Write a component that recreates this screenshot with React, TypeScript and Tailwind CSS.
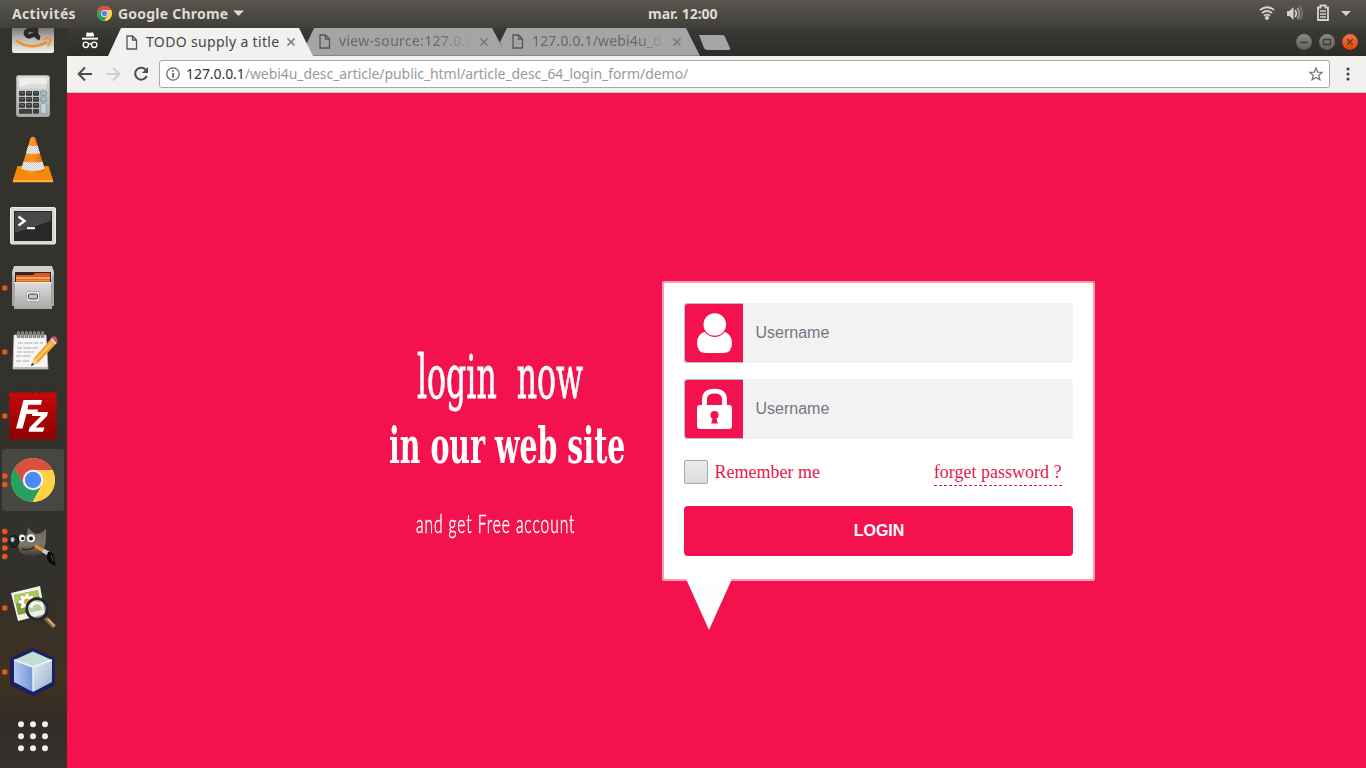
import React from "react";

function ChromeLogo({ id }: { id: string }) {
  return (
    <g>
      <defs>
        <clipPath id={id}>
          <circle r="22" />
        </clipPath>
      </defs>
      <g clipPath={`url(#${id})`}>
        <rect x="-22" y="-22" width="44" height="44" fill="#ffd24a" />
        <path d="M-22,-22 H22 V-10 H0 L-9,5 L-19,-12Z" fill="#d9503f" />
        <path d="M-18.5,-12 L-9,5 L0,10 L9,5 L-1,23 H-24 V-12Z" fill="#25a25f" />
        <path d="M0,-10 H22 V23 H-1 L9,5Z" fill="#ffd24a" />
      </g>
      <circle r="10.2" fill="#f4f4f4" />
      <circle r="8.2" fill="#4c8bf5" />
    </g>
  );
}

function Dots({ ys }: { ys: number[] }) {
  return (
    <>
      {ys.map((y) => (
        <circle key={y} cx="4.8" cy={y} r="2.8" fill="#e9541f" />
      ))}
    </>
  );
}

function Tile({ dots = [], children }: { dots?: number[]; children: React.ReactNode }) {
  return (
    <svg className="block h-16 w-[67px] shrink-0" viewBox="0 0 67 64">
      <Dots ys={dots} />
      {children}
    </svg>
  );
}

function Dock() {
  return (
    <aside className="w-[67px] shrink-0 overflow-hidden bg-[linear-gradient(180deg,#34322d_0%,#33312c_75%,#3b3023_84%,#40331f_88%,#302c27_94%,#35322d_100%)]">
      <div className="-mt-7 flex flex-col">
        <Tile>
          <defs>
            <linearGradient id="silver" x1="0" y1="0" x2="0" y2="1">
              <stop offset="0" stopColor="#dedede" />
              <stop offset="1" stopColor="#a9a9a9" />
            </linearGradient>
            <linearGradient id="shade" x1="0" y1="0" x2="0" y2="1">
              <stop offset="0" stopColor="#55534e" />
              <stop offset=".45" stopColor="#aaa9a7" />
              <stop offset="1" stopColor="#f3f3f3" />
            </linearGradient>
          </defs>
          <rect x="12" y="22" width="42" height="31" rx="2" fill="url(#shade)" />
          <path d="M36,25 V33 Q36,37 40,38 M36,30 Q25,29 26,34 Q28,39 36,33" fill="none" stroke="#292929" strokeWidth="4.5" />
          <path d="M16,40.5 Q30,51 47,42" fill="none" stroke="#ed9421" strokeWidth="2.6" />
          <path d="M43,39.5 Q51,36.5 50.5,40 Q50,44 47.5,46" fill="none" stroke="#ed9421" strokeWidth="1.8" />
        </Tile>
        <Tile>
          <rect x="16.5" y="11.5" width="33" height="41" rx="2" fill="url(#silver)" stroke="#a2a2a2" />
          <rect x="19" y="14" width="28" height="11" rx="1.5" fill="#dcdedb" stroke="#c4c4c4" strokeWidth=".6" />
          <path d="M19,23 Q33,18 47,20 V14 H19Z" fill="#eeefec" />
          {[27, 33, 39].map((y) =>
            [19, 26, 33].map((x) => (
              <g key={`${x}-${y}`}>
                <rect x={x} y={y} width="6" height="4.8" rx="1" fill="#343638" />
                <rect x={x + 1} y={y + 1} width="4" height="1.7" fill="#5c5f61" />
              </g>
            ))
          )}
          <rect x="19" y="45" width="13" height="4.8" rx="1" fill="#3d4042" />
          <rect x="33" y="45" width="6" height="4.8" rx="1" fill="#3d4042" />
          {[27, 33].map((y) => (
            <rect key={y} x="40.7" y={y} width="5.8" height="4.4" rx=".8" fill="#a8bfc9" stroke="#718893" strokeWidth=".8" />
          ))}
          <rect x="40.9" y="39.5" width="5.3" height="9.8" rx=".8" fill="#c3d5dd" stroke="#8ba0aa" strokeWidth=".8" />
        </Tile>
        <Tile>
          <defs>
            <pattern id="check" width="2" height="2" patternUnits="userSpaceOnUse">
              <rect width="2" height="2" fill="#f3f3f3" />
              <path d="M0,0H1V1H0ZM1,1H2V2H1Z" fill="#cbcbcb" />
            </pattern>
            <linearGradient id="orange">
              <stop offset="0" stopColor="#ee7800" />
              <stop offset=".45" stopColor="#ff9524" />
              <stop offset="1" stopColor="#d95f00" />
            </linearGradient>
            <clipPath id="cone">
              <path d="M30.5,10 Q33,7.5 35.3,10 L45,42 Q34,51 21,42Z" />
            </clipPath>
          </defs>
          <path d="M17.5,38 H48.5 L53,52 V54 H13 V52Z" fill="#f48a0a" />
          <path d="M13,52.3 H53 V54.3 H13Z" fill="#ffb43c" />
          <g clipPath="url(#cone)">
            <rect x="18" y="7" width="30" height="43" fill="url(#orange)" />
            <path d="M20,16 Q33,20 46,16 V24 Q33,28 20,24Z" fill="url(#check)" />
            <path d="M18,32 Q33,37 48,32 V40 Q33,46 18,40Z" fill="url(#check)" />
          </g>
        </Tile>
        <Tile>
          <rect x="10.5" y="15.5" width="45" height="36.5" rx="1.5" fill="#d8d8d5" stroke="#eeeeee" />
          <rect x="14" y="19" width="38" height="30" fill="#282828" />
          <path d="M15,20 H51 V29 L15,41Z" fill="#484848" />
          <path d="M18.5,24.5 L24.5,29 L18.5,33.5" fill="none" stroke="#fff" strokeWidth="2.5" />
          <path d="M27,36.2 H35" stroke="#fff" strokeWidth="2" />
        </Tile>
        <Tile dots={[32]}>
          <path d="M14,10 H52 L54,16 V49 H12 V16Z" fill="#d0d0d0" />
          <rect x="15" y="16" width="36" height="11" fill="#37231d" />
          <path d="M16,19 H33 L35,17 H50 V27 H16Z" fill="#dc5a20" />
          <path d="M16,22 H50" stroke="#fff0cc" strokeWidth="1.2" />
          <path d="M16,24.5 H50" stroke="#f2941f" strokeWidth="1.6" />
          <path d="M14,26 H52 V53 H14Z" fill="url(#silver)" />
          <path d="M12,16 L15,25 V50 H12Z M54,16 L51,25 V50 H54Z" fill="#a5a5a5" />
          <path d="M14,26.5 H52" stroke="#ededed" />
          <rect x="26.5" y="35.5" width="13" height="10" rx="2" fill="#f0f0f0" stroke="#a8a8a8" />
          <rect x="28.5" y="38" width="9" height="5" rx="1" fill="#c2c2c2" stroke="#454545" />
        </Tile>
        <Tile dots={[32]}>
          <path d="M14,15 H46 L48,49 H13Z" fill="#f6f6f6" stroke="#ccc" strokeWidth=".7" />
          <path d="M13,47 H48 V49 H13Z" fill="#bdbdbd" />
          {[18, 22, 26, 30, 34, 38, 42].map((x) => (
            <path key={x} d={`M${x},18 C${x - 2},14 ${x + 1},9 ${x + 1.5},14 V18`} fill="none" stroke="#858585" strokeWidth="1.6" />
          ))}
          <path d="M18,23 H43 M17,28 H38 M17,32 H34 M16,36 H31 M16,41 H29" stroke="#aaa" strokeWidth="1" strokeDasharray="5 1.4 8 1" />
          <path d="M31,46 L34,38 L50,20 L55,25 L38,43Z" fill="#f7a52e" />
          <path d="M36,40 L52,23" stroke="#ffd27a" strokeWidth="1.4" />
          <path d="M50,20 L52,17.5 L57,22.5 L55,25Z" fill="#d8d8d8" />
          <path d="M52.5,17.5 Q56.5,16 56.5,21.5Z" fill="#e7554e" stroke="#e7554e" strokeWidth="1.8" />
          <path d="M31,46 L34,38 L38,43Z" fill="#ecd1a3" />
          <path d="M31,46 L32,43 L34,44.5Z" fill="#1c1c1c" />
        </Tile>
        <Tile dots={[32]}>
          <defs>
            <linearGradient id="fz" x1="0" y1="0" x2="0" y2="1">
              <stop offset="0" stopColor="#c80808" />
              <stop offset="1" stopColor="#8e0000" />
            </linearGradient>
          </defs>
          <rect x="9" y="8" width="48" height="48" fill="url(#fz)" />
          <rect x="9" y="8" width="48" height="48" fill="none" stroke="#34322d" strokeWidth="3" strokeLinecap="round" strokeDasharray="0 6" />
          <path d="M23.5,16 H42 L41,20.8 H28.4 L27.5,25.5 H38 L37,30 H26.5 L22.5,44.5 H16Z" fill="#fff" />
          <path d="M32.5,28 H48 L47,32 L35.5,43.5 H44.5 L43,47.7 H28.5 L29.5,43.5 L41,32 H32Z" fill="#fff" />
        </Tile>
        <Tile>
          <rect x="2" y="1" width="62" height="62" rx="3" fill="#484641" />
          <Dots ys={[28, 36.5]} />
          <g transform="translate(33 32)">
            <ChromeLogo id="dock-chrome" />
          </g>
        </Tile>
        <Tile dots={[19.5, 28, 36, 44.5]}>
          <defs>
            <linearGradient id="fur" x1="0" y1="0" x2="0" y2="1">
              <stop offset="0" stopColor="#6d6859" />
              <stop offset=".6" stopColor="#7d7767" />
              <stop offset="1" stopColor="#3b3831" />
            </linearGradient>
          </defs>
          <path d="M17,32 Q20,24 27,23 L28,15 Q32,22 38,22 Q43,21 46,16 Q46.5,24 45.5,31 Q44,42 35,44 Q25,45 20,40 Z" fill="url(#fur)" />
          <ellipse cx="14" cy="29.5" rx="4.8" ry="6" fill="#20282b" stroke="#0b0e10" strokeWidth="1" />
          <ellipse cx="12.5" cy="27.5" rx="2" ry="2.5" fill="#b8c0c0" />
          <ellipse cx="22" cy="26" rx="3" ry="3.4" fill="#f2f2f2" />
          <circle cx="22.7" cy="26.5" r="1.6" fill="#161616" />
          <circle cx="31" cy="26.3" r="4" fill="#f5f5f5" />
          <circle cx="31" cy="26.6" r="2" fill="#141414" />
          <path d="M22,37 Q30,39 36,34" fill="none" stroke="#26231c" strokeWidth="1.3" />
          <path d="M36,34.5 L48,41" stroke="#ec8b30" strokeWidth="3.2" strokeLinecap="round" />
          <path d="M43,38.5 L49,42" stroke="#c9cdd0" strokeWidth="4" />
          <path d="M48,40 Q54,39 54,46 L56,54 Q46,51 47,43Z" fill="#090a0b" />
          <path d="M51,43 L53,49" stroke="#55606a" strokeWidth="1" />
        </Tile>
        <Tile dots={[32]}>
          <path d="M11,17 L40,10 L45,38 L18,45Z" fill="#f4f4ed" />
          <path d="M14,19 L38,14 L42,34 L18,39Z" fill="#7e9f3a" />
          <path d="M14,19 L38,14 L39,20 L15,28Z" fill="#b0c566" />
          {[0, 45, 90, 135].map((a) => (
            <ellipse key={a} cx="27" cy="26" rx="8.5" ry="2.7" fill="#fff" transform={`rotate(${a} 27 26)`} />
          ))}
          <circle cx="27" cy="25.5" r="3" fill="#e6a62a" />
          <circle cx="37" cy="33" r="10.3" fill="#e8e9e0" fillOpacity=".6" stroke="#20282c" strokeWidth="2.8" />
          <path d="M31,30 Q37,24 43,30" fill="none" stroke="#fff" strokeWidth="2" />
          <path d="M45.5,42 L54.5,51" stroke="#8c6b45" strokeWidth="4" />
          <path d="M48,43 L54.5,50" stroke="#dca66b" strokeWidth="2" />
        </Tile>
        <Tile dots={[32]}>
          <defs>
            <linearGradient id="cube-left">
              <stop offset="0" stopColor="#b4cbf2" />
              <stop offset="1" stopColor="#7394d8" />
            </linearGradient>
            <linearGradient id="cube-right" x1="0" y1="0" x2="1" y2="1">
              <stop offset="0" stopColor="#e6edf5" />
              <stop offset="1" stopColor="#93adcb" />
            </linearGradient>
          </defs>
          <path d="M33,10 L53,19 V44 L33,54 L12,44 V19Z" fill="#1b2060" stroke="#1b2060" strokeWidth="4" strokeLinejoin="round" />
          <path d="M33,11.5 L52,20 L33,27 L14,20Z" fill="#c3dcd8" />
          <path d="M14,20 L33,27 V52 L14,42Z" fill="url(#cube-left)" />
          <path d="M33,27 L52,20 V42 L33,52Z" fill="url(#cube-right)" />
          <path d="M14,20 L33,27 L52,20" fill="none" stroke="#eff8fa" strokeWidth="1.4" />
          <path d="M33,27 V51" stroke="#e8f2ff" strokeWidth="1.4" />
        </Tile>
        <Tile>
          {[20, 32, 44].map((y) =>
            [21, 33, 45].map((x) => <circle key={`${x}-${y}`} cx={x} cy={y + 0.3} r="3" fill="#f1f0ee" />)
          )}
        </Tile>
      </div>
    </aside>
  );
}

function TopBar() {
  return (
    <header className="flex h-7 shrink-0 items-center bg-[linear-gradient(#59564f,#403f3a)] pb-[2px] text-[14px] font-bold text-[#dfdbd2]">
      <span className="ml-3 w-[85px] whitespace-nowrap tracking-[0.35px]">Activités</span>
      <svg className="h-[15px] w-[15px]" viewBox="-22 -22 44 44">
        <ChromeLogo id="bar-chrome" />
      </svg>
      <span className="ml-[6px] w-[115px] whitespace-nowrap tracking-[0.22px]">Google Chrome</span>
      <svg className="h-[6px] w-[11px]" viewBox="0 0 11 6">
        <path d="M0,0.5 H11 L5.5,6Z" fill="#dfdbd2" />
      </svg>
      <span className="ml-[404px] w-[75px] whitespace-nowrap">mar. 12:00</span>
      <svg className="ml-auto mt-[2px] h-7 w-[110px]" viewBox="1256 0 110 28">
        <g fill="none" stroke="#d5d2cb" strokeWidth="1.8">
          <path d="M1260,10 Q1267,4.5 1274,10" />
          <path d="M1262,13 Q1267,9 1272,13" />
          <path d="M1264,15.8 Q1267,13.5 1270,15.8" />
          <path d="M1295,10 Q1297.5,13.5 1295,17" />
          <path d="M1297.5,8 Q1301,13.5 1297.5,19" stroke="#a4a19b" />
          <path d="M1300,6 Q1304,13.5 1300,20" stroke="#77756f" />
        </g>
        <circle cx="1267" cy="18" r="2" fill="#d5d2cb" />
        <path d="M1287,11 H1289.5 L1293.5,7 V20 L1289.5,16 H1287Z" fill="#d5d2cb" />
        <path d="M1320.5,5.5 H1325.5 V7.5 H1328 V20 H1318 V7.5 H1320.5Z" fill="none" stroke="#d5d2cb" strokeWidth="1.8" />
        <path d="M1320,11 H1326 M1320,14 H1326 M1320,17 H1326" stroke="#d5d2cb" strokeWidth="1.6" />
        <path d="M1341,11 H1351 L1346,16Z" fill="#d5d2cb" />
      </svg>
    </header>
  );
}

function PageIcon() {
  return (
    <svg className="h-[15px] w-[12px] shrink-0" viewBox="0 0 12 15">
      <path d="M1,1 H6.5 L10.5,5 V14 H1Z M6.5,1 V5 H10.5" fill="none" stroke="#555" strokeWidth="1.3" />
    </svg>
  );
}

function CloseIcon() {
  return (
    <svg className="h-2 w-2 shrink-0" viewBox="0 0 8 8">
      <path d="M.5,.5 L7.5,7.5 M7.5,.5 L.5,7.5" stroke="#777" strokeWidth="1.5" />
    </svg>
  );
}

function TabStrip() {
  return (
    <div className="flex h-7 shrink-0 bg-[linear-gradient(#3b3a36,#2c2c29)] text-[14px]">
      <svg className="ml-[14px] h-7 w-[18px]" viewBox="0 0 18 28">
        <path d="M5,8.5 Q5.2,4 7,4.4 Q9,5.2 11,4.4 Q12.8,4 13,8.5Z" fill="#fff" />
        <rect x="1" y="9.7" width="16" height="1.9" fill="#fff" />
        <g fill="none" stroke="#fff" strokeWidth="1.3">
          <circle cx="4.8" cy="16.8" r="2.7" />
          <circle cx="13.2" cy="16.8" r="2.7" />
          <path d="M7.5,16.3 Q9,15 10.5,16.3" />
        </g>
      </svg>
      <div className="relative z-10 ml-[9px] flex w-[205px] items-center bg-[#f2f1f0] pl-[18px] text-[#474747] [clip-path:polygon(0_100%,13px_0,191px_0,100%_100%)]">
        <PageIcon />
        <span className="-mt-[2px] ml-2 w-[141px] whitespace-nowrap tracking-[0.35px]">TODO supply a title</span>
        <CloseIcon />
      </div>
      <div className="relative z-[5] -ml-[12px] flex w-[206px] items-center border-b border-[#858585] bg-[#a5a5a5] pl-[18px] text-[#686868] [clip-path:polygon(0_100%,13px_0,191px_0,100%_100%)]">
        <PageIcon />
        <span className="-mt-[2px] ml-2 mr-[5px] w-[136px] whitespace-nowrap tracking-[0.3px] [mask-image:linear-gradient(90deg,#000_72%,transparent_98%)]">view-source:127.0.0</span>
        <CloseIcon />
      </div>
      <div className="-ml-[14px] flex w-[207px] items-center border-b border-[#858585] bg-[#a5a5a5] pl-[19px] text-[#686868] [clip-path:polygon(14px_0,193px_0,100%_100%,13px_100%,7px_14px)]">
        <PageIcon />
        <span className="-mt-[2px] ml-2 mr-[8px] w-[133px] whitespace-nowrap tracking-[0.15px] [mask-image:linear-gradient(90deg,#000_80%,transparent_100%)]">127.0.0.1/webi4u_d</span>
        <CloseIcon />
      </div>
      <svg className="-ml-[3px] h-7 w-9" viewBox="0 0 36 28">
        <path d="M2,7 H26 Q27,7 28,9 L33,20 Q33.5,22 32,22 H10 Q8,22 7,20Z" fill="#a5a5a5" />
      </svg>
      <svg className="ml-auto mr-[7px] h-7 w-[64px]" viewBox="0 0 64 28">
        <defs>
          <linearGradient id="win" x1="0" y1="0" x2="0" y2="1">
            <stop offset="0" stopColor="#8a8a80" />
            <stop offset="1" stopColor="#61615a" />
          </linearGradient>
          <linearGradient id="close" x1="0" y1="0" x2="0" y2="1">
            <stop offset="0" stopColor="#f37445" />
            <stop offset="1" stopColor="#de4600" />
          </linearGradient>
        </defs>
        <circle cx="9" cy="14" r="7.9" fill="url(#win)" />
        <circle cx="32" cy="14" r="7.9" fill="url(#win)" />
        <circle cx="55" cy="14" r="7.9" fill="url(#close)" />
        <path d="M5,14.5 H13 M28.5,11.5 H35.5 V16.5 H28.5Z M52.3,11.3 L57.7,16.7 M57.7,11.3 L52.3,16.7" stroke="#3d3c36" strokeWidth="1.3" fill="none" />
      </svg>
    </div>
  );
}

function Toolbar() {
  return (
    <div className="flex h-[37px] shrink-0 items-center border-b border-[#cbc9c6] bg-[#f2f1f0]">
      <svg className="h-9 w-[92px] shrink-0" viewBox="67 56 92 36" fill="none" strokeWidth="2">
        <path d="M92,74 H79 M85,67.5 L78.7,74 L85,80.5" stroke="#4c4c4c" />
        <path d="M106,74 H119 M113,67.5 L119.3,74 L113,80.5" stroke="#d0d0d0" />
        <path d="M146.3,70.5 A6,6 0 1,0 146.7,76" stroke="#4c4c4c" />
        <path d="M148,67 V73 H142Z" fill="#4c4c4c" />
      </svg>
      <div className="flex h-7 w-[1171px] items-center rounded-[3px] border border-[#a9a8a6] bg-white pl-[6px] pr-[6px]">
        <svg className="h-[14px] w-[14px] shrink-0" viewBox="0 0 14 14">
          <circle cx="7" cy="7" r="6.2" fill="none" stroke="#666" strokeWidth="1.3" />
          <path d="M7,6 V10.5 M7,3.2 V4.8" stroke="#555" strokeWidth="1.7" />
        </svg>
        <span className="-mt-[2px] ml-[6px] whitespace-nowrap text-[14px] tracking-[-0.065px] text-[#9a9a9a]">
          <span className="text-[#333]">127.0.0.1</span>/webi4u_desc_article/public_html/article_desc_64_login_form/demo/
        </span>
        <svg className="ml-auto h-[14px] w-[14px] shrink-0" viewBox="0 0 14 14">
          <path d="M7,1 L8.7,5.1 L13.2,5.4 L9.8,8.3 L10.9,12.8 L7,10.4 L3.1,12.8 L4.2,8.3 L.8,5.4 L5.3,5.1Z" fill="none" stroke="#777" strokeWidth="1.3" />
        </svg>
      </div>
      <svg className="ml-[16px] h-[14px] w-1" viewBox="0 0 4 14">
        <circle cx="2" cy="2" r="1.6" fill="#444" />
        <circle cx="2" cy="7" r="1.6" fill="#444" />
        <circle cx="2" cy="12" r="1.6" fill="#444" />
      </svg>
    </div>
  );
}

function Field({ children }: { children: React.ReactNode }) {
  return (
    <label className="flex h-[60px] items-center rounded bg-[#f2f2f2]">
      <svg className="h-[60px] w-[59px] rounded-l-[3px]" viewBox="0 0 59 60">
        <rect width="59" height="60" fill="#bcbcc8" />
        <path d="M59,1 H4 Q1,1 1,4 V56 Q1,59 4,59 H59Z" fill="#f3124e" />
        {children}
      </svg>
      <span className="ml-[12.5px] font-['Liberation_Sans',sans-serif] text-[16px] text-[#737782]">Username</span>
    </label>
  );
}

function LoginCard() {
  return (
    <section className="relative mt-[188px] h-[300px] w-[433px] shrink-0 rounded-[2px] border-2 border-[#f19db2] bg-white px-5 pt-5">
      <div className="flex flex-col gap-4">
        <Field>
          <path d="M20,29 Q13,32 13,40 Q13,50 22,50 H39 Q48,50 48,40 Q48,32 41,29Z" fill="#fff" />
          <circle cx="30.8" cy="21.5" r="12.5" fill="#f3124e" />
          <circle cx="30.8" cy="21.5" r="11.3" fill="#fff" />
        </Field>
        <Field>
          <path d="M20.5,29 V20.5 Q20.5,12.2 30.5,12.2 Q40.5,12.2 40.5,20.5 V29" fill="none" stroke="#fff" strokeWidth="4.8" />
          <rect x="13" y="26" width="35" height="24" rx="3" fill="#fff" />
          <circle cx="30.5" cy="36" r="4" fill="#f3124e" />
          <path d="M29,38 H32 L33.8,44.5 H27.2Z" fill="#f3124e" />
        </Field>
      </div>
      <div className="mt-[21px] flex h-[26px] items-start font-['Liberation_Serif',serif] text-[18px] leading-6 text-[#e8164f]">
        <span className="h-6 w-6 shrink-0 rounded-[2px] border border-[#a7a7a7] bg-[linear-gradient(#ebebeb,#dcdcdc)]" />
        <span className="ml-[6.5px] whitespace-nowrap">Remember me</span>
        <a className="ml-auto mr-[11.5px] h-[26px] whitespace-nowrap border-b border-dashed border-[#d81b50]">forget password ?</a>
      </div>
      <button className="mt-5 block h-[50px] w-full rounded bg-[#f3124e] pl-px font-['Liberation_Sans',sans-serif] text-[16px] font-bold text-white">LOGIN</button>
      <svg className="absolute left-[22px] top-[295px] h-[52px] w-[46px]" viewBox="0 0 46 52">
        <path d="M0,0 H46 L45,3 L23,52 L1,3Z" fill="#fdfffe" />
      </svg>
    </section>
  );
}

export default function App() {
  return (
    <div className="flex h-[768px] w-[1366px] flex-col overflow-hidden bg-[#33312c] font-['Noto_Sans',sans-serif]">
      <TopBar />
      <div className="flex min-h-0 flex-1">
        <Dock />
        <div className="flex min-w-0 flex-1 flex-col">
          <TabStrip />
          <Toolbar />
          <main className="flex min-h-0 flex-1 bg-[#f3124e]">
            <div className="flex w-[595px] shrink-0 flex-col pl-[322px] pt-[254px] text-white">
              <div className="ml-[28px] h-[60px] w-[170px] origin-left scale-x-[.526] whitespace-pre font-['DejaVu_Serif',serif] text-[60px] leading-none [-webkit-text-stroke:0.8px_white]">login  now</div>
              <div className="mt-[14px] h-[50px] w-[240px] origin-left scale-x-[.569] whitespace-nowrap font-['DejaVu_Serif',serif] text-[50px] font-bold leading-none">in our web site</div>
              <div className="ml-[27px] mt-[39px] h-[26px] w-[160px] origin-left scale-x-[.6] whitespace-nowrap font-['Lato',sans-serif] text-[26px] font-light leading-none tracking-[1.5px] [-webkit-text-stroke:0.5px_white]">and get Free account</div>
            </div>
            <LoginCard />
          </main>
        </div>
      </div>
    </div>
  );
}
